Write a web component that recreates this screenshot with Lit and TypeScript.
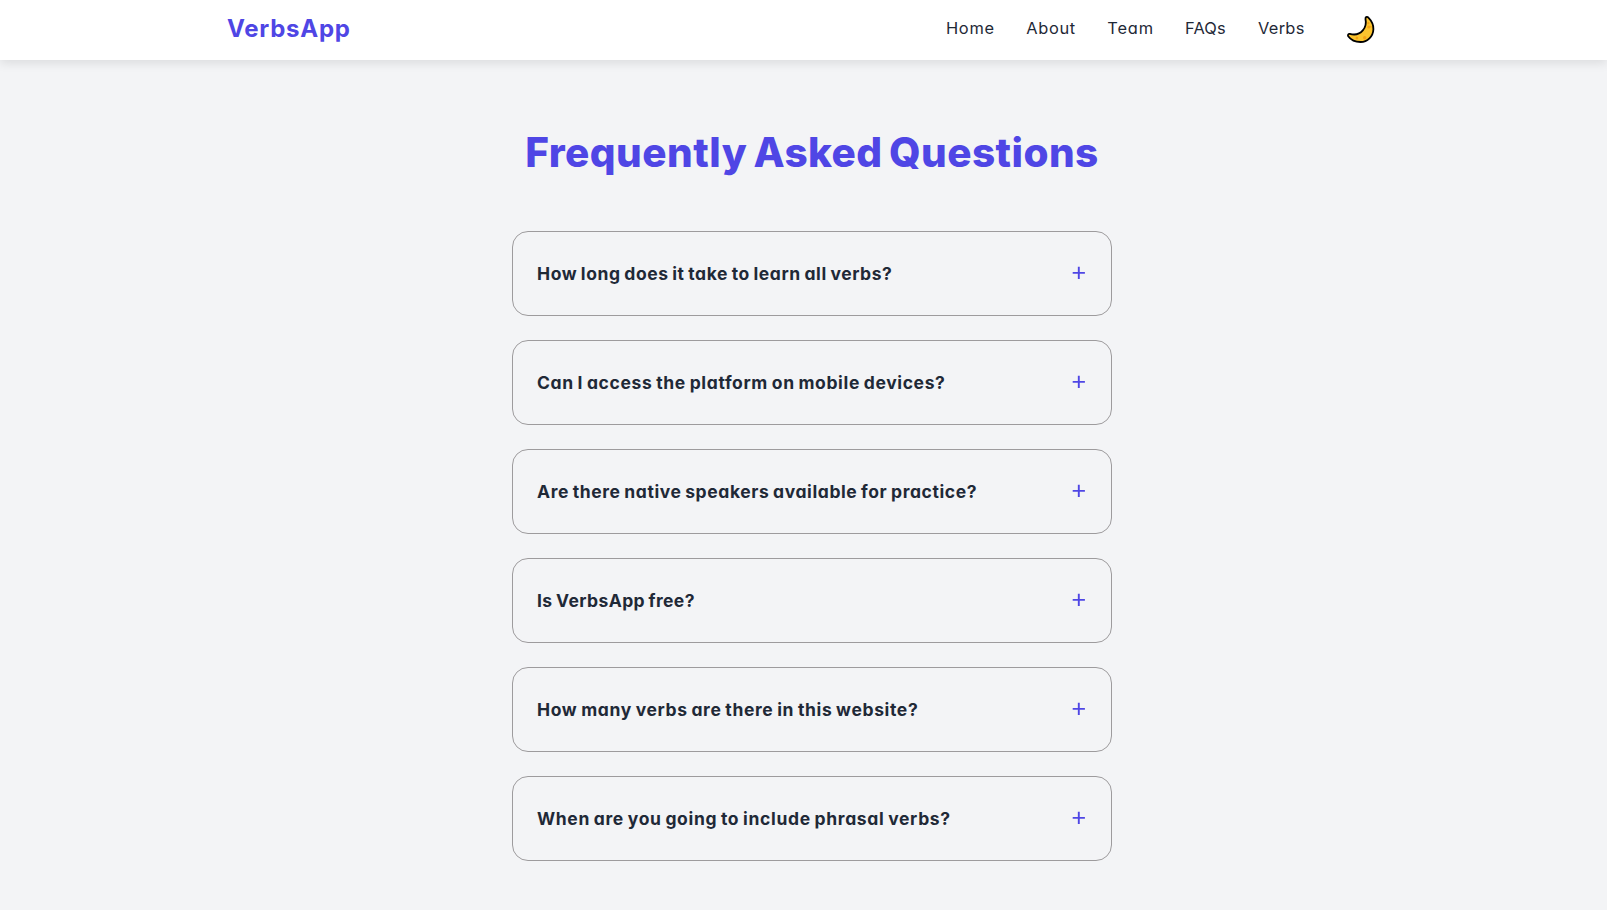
import { LitElement, html, css } from "lit";
import { styleMap } from "lit/directives/style-map.js";

interface Label {
  text: string;
  spacing: number;
  width?: number;
}

const NAV: Label[] = [
  { text: "Home", spacing: 0.75, width: 48.4 },
  { text: "About", spacing: 0.65, width: 49 },
  { text: "Team", spacing: 0.85, width: 45.8 },
  { text: "FAQs", spacing: 0.15, width: 40.9 },
  { text: "Verbs", spacing: 0.3, width: 46 },
];

const QUESTIONS: Label[] = [
  { text: "How long does it take to learn all verbs?", spacing: 0.57 },
  { text: "Can I access the platform on mobile devices?", spacing: 0.64 },
  { text: "Are there native speakers available for practice?", spacing: 0.59 },
  { text: "Is VerbsApp free?", spacing: 0.4 },
  { text: "How many verbs are there in this website?", spacing: 0.64 },
  { text: "When are you going to include phrasal verbs?", spacing: 0.66 },
];

class NavBar extends LitElement {
  static styles = css`
    :host { display: block; position: relative; z-index: 1; }
    .bar {
      box-sizing: border-box;
      height: 60px;
      padding: 0 231px 0 227px;
      display: flex;
      align-items: center;
      justify-content: space-between;
      background: #fff;
      box-shadow: 0 3px 10px rgba(0, 0, 0, 0.1);
    }
    .logo {
      font-size: 24px;
      font-weight: 700;
      letter-spacing: 0.75px;
      line-height: 36px;
      padding-bottom: 3px;
      color: #4f46e5;
      text-decoration: none;
    }
    .right { display: flex; align-items: center; }
    .links { display: flex; gap: 32px; padding-bottom: 4px; }
    .link {
      font-size: 16.4px;
      line-height: 24px;
      color: #1f2937;
      text-decoration: none;
      white-space: nowrap;
    }
    .theme {
      display: block;
      margin: 0 0 0 42px;
      padding: 0;
      border: 0;
      background: none;
      width: 30px;
      height: 30px;
    }
    .moon { display: block; }
  `;
  render() {
    return html`
      <header class="bar">
        <a class="logo">VerbsApp</a>
        <div class="right">
          <nav class="links">
            ${NAV.map(
              (l) => html`<a class="link" style=${styleMap({ width: `${l.width}px`, letterSpacing: `${l.spacing}px` })}>${l.text}</a>`
            )}
          </nav>
          <button class="theme" aria-label="Toggle theme">
            <svg class="moon" width="30" height="30" viewBox="0 0 30 30">
              <path
                d="M19.6 2.7C20.2 1.6 21.5 1.6 22.4 2.6C25.5 5.8 27.6 9.8 27.4 14.2C27.1 21.6 21.4 27 14.6 27C9.4 27 4.8 24.8 2.2 21.2C1.5 20 2.4 18.6 3.8 18.9C8.6 20.2 13.8 19 16.8 15.4C19.8 11.8 20.2 7.2 19.5 4.2Z"
                fill="#fcc42e" stroke="#000" stroke-width="1.8" stroke-linejoin="round"
              />
              <g fill="#f5a216">
                <circle cx="22.3" cy="8.2" r="1.1" />
                <circle cx="22.8" cy="12" r="1.6" />
                <circle cx="10.9" cy="23.1" r="1.4" />
                <circle cx="18.7" cy="22.8" r="1.7" />
                <circle cx="24.9" cy="11.7" r="0.8" />
              </g>
            </svg>
          </button>
        </div>
      </header>
    `;
  }
}
customElements.define("nav-bar", NavBar);

class FaqItem extends LitElement {
  static properties = { text: { type: String }, spacing: { type: Number } };
  declare text: string;
  declare spacing: number;
  static styles = css`
    :host { display: block; }
    .card {
      box-sizing: border-box;
      height: 85px;
      padding: 0 24px;
      border: 1px solid #9d9b9d;
      border-radius: 16px;
      display: flex;
      align-items: center;
      justify-content: space-between;
    }
    .question {
      margin: 0;
      font-size: 17.5px;
      font-weight: 700;
      line-height: 26px;
      word-spacing: -1px;
      color: #1f2937;
      white-space: nowrap;
    }
    .plus { display: block; margin: 0 1px 1px 0; }
  `;
  render() {
    return html`
      <div class="card">
        <h3 class="question" style=${styleMap({ letterSpacing: `${this.spacing}px` })}>${this.text}</h3>
        <svg class="plus" width="14" height="14" viewBox="0 0 14 14" stroke="#4f46e5" stroke-width="1.9">
          <path d="M0.7 6.9H12.9M6.8 0.7V12.9" />
        </svg>
      </div>
    `;
  }
}
customElements.define("faq-item", FaqItem);

class AppRoot extends LitElement {
  static styles = css`
    :host {
      display: block;
      min-height: 910px;
      background: #f3f4f6;
      font-family: Inter, sans-serif;
      font-feature-settings: "cv11";
    }
    .main {
      display: flex;
      flex-direction: column;
      align-items: center;
      padding: 63px 0 0 17px;
    }
    .title {
      margin: 0 0 48px;
      font-size: 40.5px;
      font-weight: 800;
      line-height: 60px;
      letter-spacing: 0.44px;
      word-spacing: -3px;
      color: #4f46e5;
      white-space: nowrap;
    }
    .list { width: 600px; display: grid; gap: 24px; }
  `;
  render() {
    return html`
      <nav-bar></nav-bar>
      <main class="main">
        <h1 class="title">Frequently Asked Questions</h1>
        <section class="list">
          ${QUESTIONS.map((q) => html`<faq-item .text=${q.text} .spacing=${q.spacing}></faq-item>`)}
        </section>
      </main>
    `;
  }
}
customElements.define("app-root", AppRoot);
